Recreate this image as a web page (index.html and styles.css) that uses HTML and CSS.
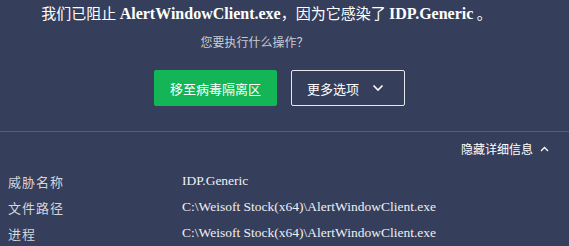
FILE: index.html
```html
<!DOCTYPE html>
<html lang="zh-CN">
<head>
<meta charset="utf-8">
<link rel="stylesheet" href="styles.css">
</head>
<body>
<div class="page">
  <div class="header">
    <div class="title">我们已阻止 <b class="latin">AlertWindowClient.exe</b>，因为它感染了 <b class="latin">IDP.Generic</b> 。</div>
    <div class="subtitle">您要执行什么操作？</div>
  </div>
  <div class="actions">
    <button class="btn btn-primary">移至病毒隔离区</button>
    <button class="btn btn-outline"><span>更多选项</span>
      <svg class="chev" width="12" height="8" viewBox="0 0 12 8"><path d="M1.5 1.5 L6 6 L10.5 1.5" fill="none" stroke="#fff" stroke-width="1.6"/></svg>
    </button>
  </div>
  <div class="divider"></div>
  <div class="toggle-row">
    <span class="toggle">隐藏详细信息</span>
    <svg class="chev-up" width="9" height="6" viewBox="0 0 9 6"><path d="M1 5 L4.5 1.5 L8 5" fill="none" stroke="#fff" stroke-width="1.3"/></svg>
  </div>
  <div class="details">
    <div class="row"><span class="label">威胁名称</span><span class="value">IDP.Generic</span></div>
    <div class="row"><span class="label">文件路径</span><span class="value">C:\Weisoft Stock(x64)\AlertWindowClient.exe</span></div>
    <div class="row"><span class="label">进程</span><span class="value">C:\Weisoft Stock(x64)\AlertWindowClient.exe</span></div>
  </div>
</div>
</body>
</html>
```
FILE: styles.css
```css
html, body {
  margin: 0;
  padding: 0;
  background: #353e5a;
}
.page {
  width: 569px;
  height: 246px;
  overflow: hidden;
  font-family: "Noto Sans CJK SC", "Liberation Sans", sans-serif;
  color: #ffffff;
}
.header {
  padding: 3px 60px 0 0;
  text-align: center;
}
.title {
  font-size: 15px;
  line-height: 20px;
  height: 20px;
  white-space: nowrap;
  padding-left: 24px;
}
.latin {
  font-family: "Liberation Serif", "Noto Sans CJK SC", serif;
  font-weight: bold;
  font-size: 16px;
}
.subtitle {
  margin-top: 11px;
  font-size: 12px;
  line-height: 16px;
  color: #c9ccd4;
}
.actions {
  display: flex;
  gap: 14px;
  padding-left: 154px;
  margin-top: 20px;
}
.btn {
  height: 36px;
  font-family: "Noto Sans CJK SC", sans-serif;
  font-size: 13px;
  color: #ffffff;
  border-radius: 2px;
  margin: 0;
  cursor: pointer;
}
.btn-primary {
  width: 123px;
  background: #13b556;
  border: none;
}
.btn-outline {
  width: 114px;
  background: transparent;
  border: 1px solid #e6e8ee;
  display: flex;
  align-items: center;
  padding: 0 20px 0 15px;
  justify-content: space-between;
}
.divider {
  margin-top: 25px;
  height: 1px;
  background: #545e7a;
}
.toggle-row {
  display: flex;
  justify-content: flex-end;
  align-items: center;
  gap: 7px;
  padding-right: 20px;
  margin-top: 8px;
  height: 18px;
}
.toggle {
  font-size: 12px;
  line-height: 18px;
}
.details {
  margin-top: 10px;
}
.row {
  display: flex;
  align-items: center;
  height: 26px;
  padding-left: 8px;
}
.label {
  width: 174px;
  font-size: 13px;
  letter-spacing: 1px;
  color: #d3d6dd;
}
.value {
  font-family: "Liberation Serif", serif;
  font-size: 13.5px;
  color: #eef0f4;
}
```
